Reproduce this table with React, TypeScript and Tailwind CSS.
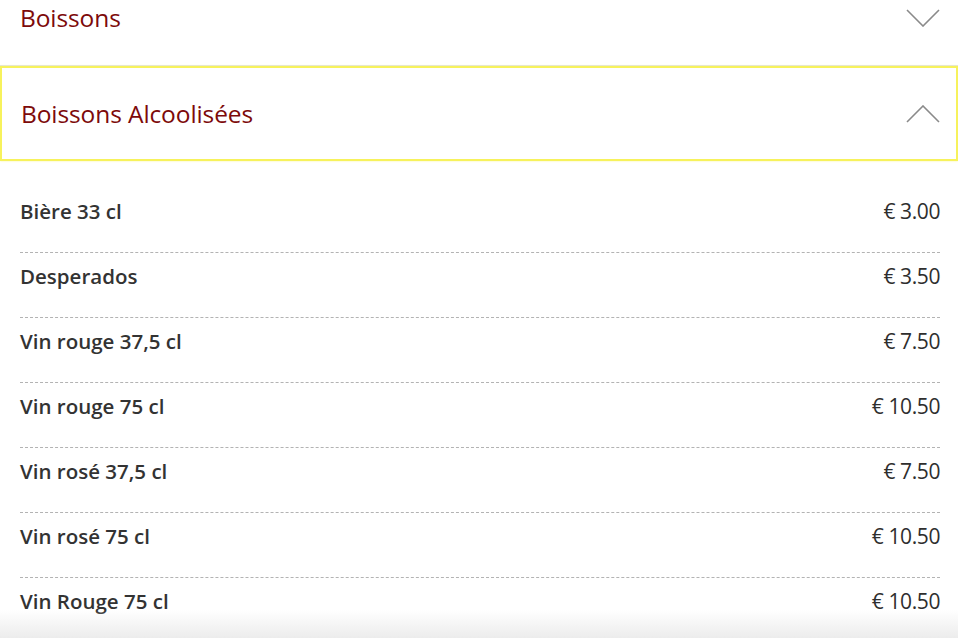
import React from "react";

type Item = { name: string; price: string };

const items: Item[] = [
  { name: "Bière 33 cl", price: "€ 3.00" },
  { name: "Desperados", price: "€ 3.50" },
  { name: "Vin rouge 37,5 cl", price: "€ 7.50" },
  { name: "Vin rouge 75 cl", price: "€ 10.50" },
  { name: "Vin rosé 37,5 cl", price: "€ 7.50" },
  { name: "Vin rosé 75 cl", price: "€ 10.50" },
  { name: "Vin Rouge 75 cl", price: "€ 10.50" },
];

const Chevron: React.FC<{ up?: boolean }> = ({ up }) => (
  <svg width="34" height="18" viewBox="0 0 34 18" fill="none" className="shrink-0">
    <path
      d={up ? "M1 17 L17 1 L33 17" : "M1 1 L17 17 L33 1"}
      stroke="#8a8a8a"
      strokeWidth="1.6"
    />
  </svg>
);

const App: React.FC = () => {
  return (
    <div className="relative w-[958px] h-[638px] overflow-hidden bg-white font-['Open_Sans','Noto_Sans',sans-serif]">
      {/* Collapsed category */}
      <div className="-mt-[29px] h-[95px] flex items-center justify-between pl-5 pr-[18px] border-b border-[#dde0e6]">
        <h2 className="text-[24.5px] text-[#7d0a0a] tracking-[-0.1px]">Boissons</h2>
        <Chevron />
      </div>

      {/* Open category */}
      <div className="h-[95px] flex items-center justify-between pl-[19px] pr-[16px] border-2 border-[#f7f25c] shadow-[0_0_2px_#f9f6a0]">
        <h2 className="text-[24.5px] text-[#7d0a0a] tracking-[-0.1px] pt-[2px]">Boissons Alcoolisées</h2>
        <Chevron up />
      </div>

      <div className="pt-[27px] pl-5 pr-[18px]">
        {items.map((item) => (
          <div
            key={item.name}
            className="flex items-center justify-between h-[65px] pt-[12px] pb-[30px] border-b border-dashed border-[#b3b3b3]"
          >
            <span className="text-[20.5px] leading-[24px] font-semibold text-[#333333]">{item.name}</span>
            <span className="text-[21px] leading-[24px] text-[#2e2e2e] tracking-[-0.4px]">{item.price}</span>
          </div>
        ))}
      </div>

      {/* bottom fade */}
      <div className="absolute left-0 right-0 bottom-0 h-[28px] bg-gradient-to-b from-white/0 to-[#ececec]" />
    </div>
  );
};

export default App;
